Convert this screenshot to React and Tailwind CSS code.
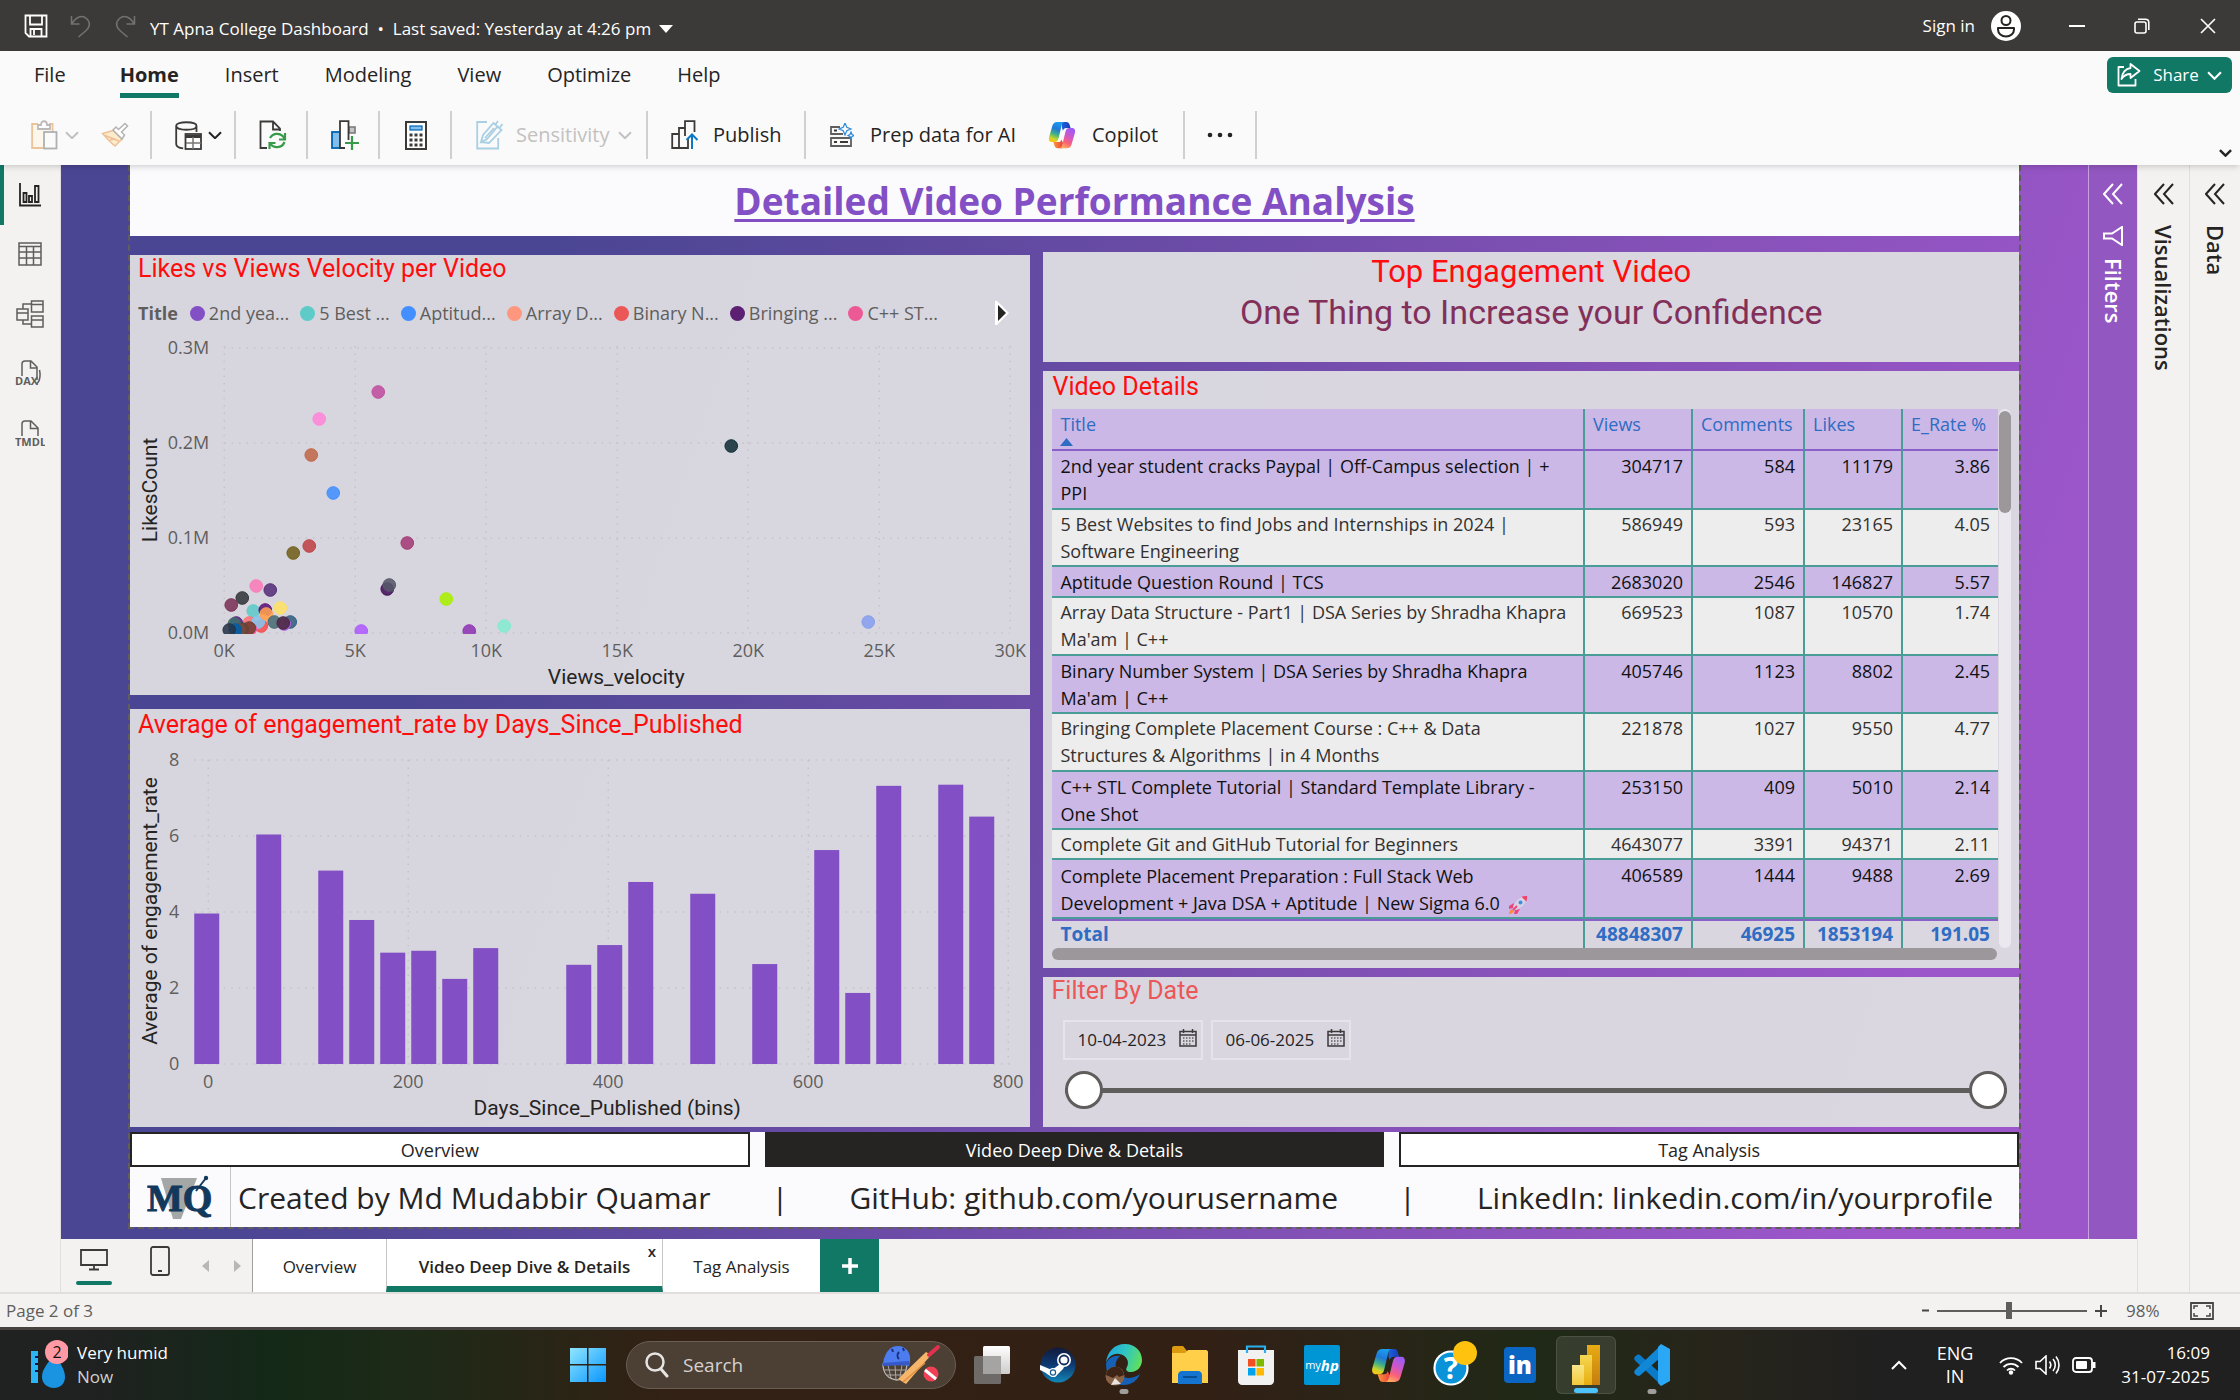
import React from "react";

const legend = [
  ["2nd yea...", "#8250c4"],
  ["5 Best ...", "#5ecbc8"],
  ["Aptitud...", "#438fff"],
  ["Array D...", "#ff977e"],
  ["Binary N...", "#eb5757"],
  ["Bringing ...", "#5b2071"],
  ["C++ ST...", "#ec5a96"],
];

const dots = [
  [248, 65, "#c04f9e"], [189, 92, "#ff86d9"], [181, 128, "#c1694a"], [203, 166, "#438fff"],
  [179, 219, "#bf4347"], [163, 226, "#73601c"], [277, 216, "#a43b76"], [257, 262, "#45135b"],
  [259, 258, "#56586a"], [316, 272, "#a8f000"], [374, 299, "#85ebd0"], [339, 304, "#9036b4"],
  [231, 304, "#af5bff"], [601, 119, "#13303a"], [738, 295, "#869fee"], [126, 259, "#fb7cb8"],
  [140, 263, "#57307a"], [112, 271, "#33373a"], [101, 278, "#7c3257"], [123, 284, "#5ecbc8"],
  [135, 283, "#5b1378"], [133, 294, "#ffb89b"], [131, 299, "#f64f51"], [119, 296, "#fb7474"],
  [128, 295, "#86c4ee"], [136, 287, "#ffa04f"], [150, 281, "#ffe066"], [160, 295, "#346080"],
  [144, 295, "#4a6c74"], [154, 297, "#ac5be0"], [153, 296, "#49293f"], [120, 302, "#f0509a"],
  [106, 296, "#5a2080"], [104, 297, "#3f706c"], [112, 302, "#4a4f4b"], [119, 301, "#6f4030"],
  [109, 303, "#704d40"], [105, 303, "#005fab"], [99, 303, "#283548"],
];

const bars = [
  [0, 3.96], [2, 6.04], [4, 5.09], [5, 3.79], [6, 2.93], [7, 2.98], [8, 2.24], [9, 3.05],
  [12, 2.61], [13, 3.13], [14, 4.79], [16, 4.48], [18, 2.63], [20, 5.63], [21, 1.87],
  [22, 7.32], [24, 7.35], [25, 6.51],
];

const rows = [
  [["2nd year student cracks Paypal | Off-Campus selection | +", "PPI"], "304717", "584", "11179", "3.86"],
  [["5 Best Websites to find Jobs and Internships in 2024 |", "Software Engineering"], "586949", "593", "23165", "4.05"],
  [["Aptitude Question Round | TCS"], "2683020", "2546", "146827", "5.57"],
  [["Array Data Structure - Part1 | DSA Series by Shradha Khapra", "Ma'am | C++"], "669523", "1087", "10570", "1.74"],
  [["Binary Number System | DSA Series by Shradha Khapra", "Ma'am | C++"], "405746", "1123", "8802", "2.45"],
  [["Bringing Complete Placement Course : C++ & Data", "Structures & Algorithms | in 4 Months"], "221878", "1027", "9550", "4.77"],
  [["C++ STL Complete Tutorial | Standard Template Library -", "One Shot"], "253150", "409", "5010", "2.14"],
  [["Complete Git and GitHub Tutorial for Beginners"], "4643077", "3391", "94371", "2.11"],
  [["Complete Placement Preparation : Full Stack Web", "Development + Java DSA + Aptitude | New Sigma 6.0"], "406589", "1444", "9488", "2.69"],
];

function Svg({ w, h, children, className = "", ...p }) {
  return (
    <svg width={w} height={h} viewBox={`0 0 ${w} ${h}`} fill="none" className={`shrink-0 ${className}`} aria-hidden="true" {...p}>
      {children}
    </svg>
  );
}

function Chevron({ className = "", w = 14, sw = 2 }) {
  return (
    <svg width={w} height={w * 0.6} viewBox="0 0 14 8.4" fill="none" className={`shrink-0 ${className}`} aria-hidden="true">
      <path d="M1 1.2l6 6 6-6" stroke="currentColor" strokeWidth={sw} />
    </svg>
  );
}

function CopilotIcon({ size, id }) {
  return (
    <svg width={size} height={size} viewBox="0 0 32 32" aria-hidden="true" className="shrink-0">
      <defs>
        <linearGradient id={id + "a"} x1="0.6" y1="0" x2="0.3" y2="1">
          <stop offset="0" stopColor="#1a9ef0" /><stop offset="0.35" stopColor="#2178d8" />
          <stop offset="0.6" stopColor="#3cae8c" /><stop offset="0.85" stopColor="#c8d62a" /><stop offset="1" stopColor="#ffc21a" />
        </linearGradient>
        <linearGradient id={id + "b"} x1="0.7" y1="0" x2="0.3" y2="1">
          <stop offset="0" stopColor="#9a5cf5" /><stop offset="0.4" stopColor="#cf57c8" />
          <stop offset="0.7" stopColor="#f8607a" /><stop offset="1" stopColor="#ffab5e" />
        </linearGradient>
        <linearGradient id={id + "c"}><stop offset="0" stopColor="#1b62d8" /><stop offset="1" stopColor="#1a3ab8" /></linearGradient>
        <linearGradient id={id + "d"}><stop offset="0" stopColor="#ff9a3c" /><stop offset="1" stopColor="#e8403c" /></linearGradient>
      </defs>
      <path d="M16 1h5c2 0 3 1 3.600 3l1.200 4h-5c-2 0-3 1-3.700 3L16 8z" fill={`url(#${id}c)`} />
      <path d="M16 31h-5c-2 0-3-1-3.600-3L6 24h6c2 0 2.600-1 3.200-3l2 4z" fill={`url(#${id}d)`} />
      <path d="M10.500 1H19c-2 0-2.700 1.500-3.300 3.500L12 20c-.7 2.800-2 4-4.500 4H4.500C1.500 24 .5 21.500 1.200 18.500L5 5.500C5.800 2.500 7.500 1 10.500 1z" fill={`url(#${id}a)`} />
      <path d="M21.500 31H13c2 0 2.700-1.500 3.300-3.500L20 12c.7-2.800 2-4 4.500-4h3c3 0 4 2.500 3.300 5.500L27 26.500c-.8 3-2.500 4.500-5.500 4.500z" fill={`url(#${id}b)`} />
    </svg>
  );
}

function TitleBar() {
  return (
    <header className="flex h-[51px] items-center bg-[#3b3a38] text-[17px] text-white">
      <button aria-label="Save" className="ml-6">
        <Svg w={24} h={24}>
          <path d="M1.500 1.500h21v21H5l-3.500-3.500zM6 1.500v9h12v-9M6.500 22v-7h11v7M10 15v6" stroke="#fff" strokeWidth="1.800" />
        </Svg>
      </button>
      <button aria-label="Undo" className="ml-[22px]">
        <Svg w={22} h={24}><path d="M1.500 2v8h8M2 9.500C6 3 12 0.500 16.500 4.500s3.500 9-1.500 13l-6.500 5.500" stroke="#73716f" strokeWidth="1.600" /></Svg>
      </button>
      <button aria-label="Redo" className="ml-[22px]">
        <Svg w={22} h={24}><path d="M20.500 2v8h-8M20 9.500C16 3 10 0.500 5.500 4.500s-3.500 9 1.500 13l6.500 5.500" stroke="#73716f" strokeWidth="1.600" /></Svg>
      </button>
      <button className="ml-[14px] flex items-center pt-1.5">
        YT Apna College Dashboard&nbsp;&nbsp;•&nbsp;&nbsp;Last saved: Yesterday at 4:26 pm
        <Svg w={14} h={8} className="ml-2"><path d="M0 0h14L7 8z" fill="#fff" /></Svg>
      </button>
      <div className="ml-auto flex items-center">
        <button className="flex items-center gap-4">
          Sign in
          <Svg w={30} h={30}>
            <circle cx="15" cy="15" r="15" fill="#fff" />
            <circle cx="15" cy="9.500" r="4.500" stroke="#252423" strokeWidth="2" />
            <path d="M7 17h16v1.500c0 4-3.500 7-8 7s-8-3-8-7z" stroke="#252423" strokeWidth="2" strokeLinejoin="round" />
          </Svg>
        </button>
        <button aria-label="Minimize" className="ml-12"><Svg w={16} h={16}><path d="M0 8h16" stroke="#fff" strokeWidth="2" /></Svg></button>
        <button aria-label="Restore" className="ml-[49px]">
          <Svg w={16} h={16}><rect x="1" y="4" width="11" height="11" rx="2" stroke="#fff" strokeWidth="1.600" /><path d="M4 1.200h7.500a3.300 3.300 0 013.300 3.300V12" stroke="#fff" strokeWidth="1.600" /></Svg>
        </button>
        <button aria-label="Close" className="mr-6 ml-[50px]"><Svg w={16} h={16}><path d="M1 1l14 14M15 1L1 15" stroke="#fff" strokeWidth="1.600" /></Svg></button>
      </div>
    </header>
  );
}

const menu = ["Insert", "Modeling", "View", "Optimize", "Help"];

function Ribbon() {
  const group = "flex h-12 items-center border-r-2 border-[#d2d0ce]";
  return (
    <div className="relative z-10 h-[114px] bg-[#fafafa] text-[20px] text-[#252423] shadow-md">
      <div className="flex h-[60px] items-start">
        <nav className="flex gap-[46px] pt-2.5 pl-[34px]">
          <button className="mr-2 pb-[9px] leading-7">File</button>
          <button className="border-b-[5px] border-[#117865] pb-1 leading-7 font-bold">Home</button>
          {menu.map((m) => <button key={m} className="pb-[9px] leading-7">{m}</button>)}
        </nav>
        <button className="mt-1.5 mr-2 ml-auto flex h-9 w-[125px] items-center justify-center rounded-md bg-[#117865] text-[17px] text-white">
          <Svg w={24} h={24} className="mr-3"><path d="M7 4H1.500v18.500h17V16M13.500 1l9 7-9 7v-4c-4 0-7 2-9 5 .5-6 4-10.500 9-11z" stroke="#fff" strokeWidth="1.800" strokeLinejoin="round" /></Svg>
          Share
          <Chevron className="ml-2" w={15} />
        </button>
      </div>
      <div className="flex items-center">
        <div className={`${group} w-[152px] pl-[31px]`}>
          <button aria-label="Paste" className="flex items-center gap-1.5 text-[#c3c1bf]">
            <Svg w={28} h={30}>
              <path d="M7 4H1.200v24H12M18 4h3.500v8" stroke="#ebc49c" strokeWidth="2" />
              <path d="M2.500 5.500h18V11H12v16H2.500z" fill="#fdf6ea" />
              <path d="M7 9V5h3c0-5 6-5 6 0h3v4z" fill="#fff" stroke="#bcbab8" strokeWidth="1.800" />
              <rect x="13" y="12" width="12.500" height="16.500" fill="#fafafa" stroke="#aeb0b2" strokeWidth="1.800" />
            </Svg>
            <Chevron />
          </button>
          <button aria-label="Format painter" className="ml-[22px]">
            <Svg w={28} h={26}>
              <path d="M12 8.500L1.500 11.500C5 15 9 20 14 24l7-7z" fill="#fdeccb" stroke="#efbf96" strokeWidth="1.500" />
              <path d="M4 13.500l14 5.500M9 18l5-1" stroke="#efbf96" strokeWidth="1.500" />
              <path d="M12 8l9 9 2.500-4-3-3L26.500 4 24 1.500 17.500 7.500l-2.500-2.500z" fill="#fff" stroke="#b5b3b1" strokeWidth="1.500" />
            </Svg>
          </button>
        </div>
        <div className={`${group} w-[84px] pl-[23px]`}>
          <button aria-label="Get data" className="flex items-center gap-1.5">
            <Svg w={27} h={29}>
              <path d="M1.200 5v18c0 3 3 4 7 4.300M21.500 5v6M1.200 5c0-5 20.300-5 20.300 0s-20.300 5-20.300 0z" stroke="#3b3a39" strokeWidth="1.800" />
              <rect x="10.500" y="13" width="15.500" height="15" fill="#fff" stroke="#3b3a39" strokeWidth="1.800" />
              <path d="M10.500 15.500h15.500" stroke="#3b3a39" strokeWidth="3" /><path d="M11 22h15M18 16v12" stroke="#797775" strokeWidth="1.500" />
            </Svg>
            <Chevron />
          </button>
        </div>
        <div className={`${group} w-[72px] justify-center pl-1`}>
          <button aria-label="Refresh">
            <Svg w={28} h={30}>
              <path d="M8 28H1.500V1.500H14l7 7V11M14 1.500v8h7" stroke="#3b3a39" strokeWidth="1.800" />
              <path d="M25.500 19A8 8 0 0011 18M11 23a8 8 0 0014.500-1M26 13v6.500h-6M10.500 29v-6h6" stroke="#379b4a" strokeWidth="2.200" />
            </Svg>
          </button>
        </div>
        <div className={`${group} w-[72px] justify-center pl-1`}>
          <button aria-label="New visual">
            <Svg w={28} h={30}>
              <rect x="1" y="12" width="8" height="16" fill="#83bdec" stroke="#0063b1" strokeWidth="1.800" />
              <path d="M18 7h6v6h-6z" fill="#c8c6c4" stroke="#797775" strokeWidth="1.600" />
              <path d="M14 28H9V1.200h8.500V20" fill="#fff" stroke="#3b3a39" strokeWidth="1.800" />
              <path d="M21 16v14M14 23h14" stroke="#379b4a" strokeWidth="2.200" />
            </Svg>
          </button>
        </div>
        <div className={`${group} w-[72px] justify-center pl-0.5`}>
          <button aria-label="Calculation">
            <Svg w={22} h={29}>
              <rect x="1" y="1" width="20" height="27" fill="#fff" stroke="#3b3a39" strokeWidth="2" />
              <rect x="5" y="5" width="12" height="4" fill="#83bdec" stroke="#0063b1" strokeWidth="1.200" />
              <path d="M4.500 14h13M4.500 19h13M4.500 24h13" stroke="#3b3a39" strokeWidth="3" strokeDasharray="3 2" />
            </Svg>
          </button>
        </div>
        <div className={`${group} w-[196px] pl-6`}>
          <button className="flex items-center text-[#c3c1bf]">
            <Svg w={28} h={30}>
              <path d="M11 2H1.200v26.500h21V18" stroke="#a9cfe3" strokeWidth="1.800" />
              <path d="M5 22l2-7L17.500 3l4 3.500L11 19z" stroke="#a9cfe3" strokeWidth="1.800" />
              <path d="M5 22l8 1L25.500 10l-4-3.500M18 8l-9 10M22 1l-3 4M26.500 4l-3 4" stroke="#a9cfe3" strokeWidth="1.800" />
            </Svg>
            <span className="mr-[9px] ml-3">Sensitivity</span>
            <Chevron />
          </button>
        </div>
        <div className={`${group} w-[158px] pl-[23px]`}>
          <button className="flex items-center gap-3.5">
            <Svg w={28} h={30}>
              <path d="M8 28H1.200V14H8M8 28V8h6M14 16V1.200h9.500V12M8 28h9V18" stroke="#3b3a39" strokeWidth="1.800" />
              <path d="M21 29V15M15.500 20l5.500-5.500 5.500 5.500" stroke="#0a78c2" strokeWidth="2" />
            </Svg>
            Publish
          </button>
        </div>
        <div className={`${group} w-[379px] pl-6`}>
          <button className="flex items-center gap-4">
            <Svg w={24} h={24}>
              <path d="M10 4H1v7h12M1 15h20v8H1z" stroke="#605e5c" strokeWidth="1.800" />
              <path d="M4 7.500h3M4 19h3M10 19h8" stroke="#3b3a39" strokeWidth="2" />
              <path d="M15 0l1.800 4.200L21 6l-4.200 1.800L15 12l-1.800-4.200L9 6l4.200-1.800zM21 9l1 2.500 2 1-2 1-1 2.500-1-2.500-2-1 2-1z" fill="#fafafa" stroke="#2b88d8" strokeWidth="1.200" />
            </Svg>
            Prep data for AI
          </button>
          <button className="ml-8 flex items-center gap-4">
            <CopilotIcon size={28} id="r" />
            Copilot
          </button>
        </div>
        <div className={`${group} w-[72px] justify-center`}>
          <button aria-label="More"><Svg w={26} h={6}><circle cx="3" cy="3" r="2.300" fill="#252423" /><circle cx="13" cy="3" r="2.300" fill="#252423" /><circle cx="23" cy="3" r="2.300" fill="#252423" /></Svg></button>
        </div>
        <button aria-label="Collapse ribbon" className="mt-9 mr-2 ml-auto"><Chevron w={13} sw={2.6} /></button>
      </div>
    </div>
  );
}

function SideRail() {
  const s = { stroke: "#605e5c", strokeWidth: 1.5 };
  return (
    <nav className="flex w-[61px] shrink-0 flex-col border-r border-[#e1dfdd] bg-[#f3f2f1]">
      <button aria-label="Report view" className="flex h-[60px] items-center justify-center border-l-4 border-[#117865] pr-1">
        <Svg w={22} h={24}><path d="M1 0v22.500h21M4.500 19v-9h3v9zM10 19v-6h3v6zM16 19V3h3.500v16z" stroke="#252423" strokeWidth="1.800" /></Svg>
      </button>
      <button aria-label="Table view" className="flex h-[58px] items-center justify-center">
        <Svg w={24} h={24}><path d="M1 1h22v22H1zM1 4.500h22M1 10h22M1 16h22M8.500 4.500V23M15.500 4.500V23" {...s} /></Svg>
      </button>
      <button aria-label="Model view" className="flex h-[61px] items-center justify-center">
        <Svg w={28} h={28}><path d="M1 9h11v11H1zM1 13h11M15.500 1H27v11H15.500zM15.500 4.500H27M15.500 16H27v11H15.500zM15.500 20H27M7 9V4h8.500M7 20v4h8.500" {...s} /></Svg>
      </button>
      <button aria-label="DAX query view" className="flex h-[60px] items-center justify-center">
        <Svg w={30} h={28}>
          <path d="M7 16V4c0-2 1-3 3-3h6l6 6v13M15.500 1v7h6.500M24.500 10c1 4 1 11-3 14" {...s} />
          <text x="0" y="25" fill="#605e5c" fontWeight="700" className="font-['Open_Sans',sans-serif] text-[11px]">DAX</text>
        </Svg>
      </button>
      <button aria-label="TMDL view" className="flex h-[60px] items-center justify-center">
        <Svg w={30} h={28}>
          <path d="M7 16V4c0-2 1-3 3-3h6l7 7v8M15.500 1v7.500H23" {...s} />
          <text x="0" y="26" fill="#605e5c" fontWeight="700" className="font-['Open_Sans',sans-serif] text-[11px]">TMDL</text>
        </Svg>
      </button>
    </nav>
  );
}

const axis = "fill-[#605e5c] text-[18px] font-['Open_Sans',sans-serif]";
const axisTitle = "fill-[#252423] text-[21px] font-['Roboto',sans-serif]";
const panel = "bg-[#dcdbe1]/97";
const heading = "font-['Roboto',sans-serif] text-[25px] leading-7";

function ScatterChart() {
  return (
    <section className={`flex min-h-0 flex-[440] flex-col ${panel}`}>
      <h2 className={`${heading} pl-2 text-[#ff0d0d]`}>Likes vs Views Velocity per Video</h2>
      <div className="mt-4 flex h-7 items-center pr-5 pl-2 text-[18px] text-[#605e5c]">
        <b className="mr-3">Title</b>
        <ul className="flex gap-[11px]">
          {legend.map(([t, c]) => (
            <li key={t} className="flex items-center gap-1"><i className="size-[15px] rounded-full" style={{ background: c }} />{t}</li>
          ))}
        </ul>
        <button aria-label="Next legend page" className="ml-auto"><Svg w={16} h={24}><path d="M1 0h2l12 12L3 24H1z" fill="#fff" /><path d="M4 4l8 8-8 8z" fill="#252423" /></Svg></button>
      </div>
      <svg viewBox="0 0 900 368" className="min-h-0 w-full flex-1">
        <g stroke="#c6c3c6" strokeWidth="1.500" strokeDasharray="1.500 5.900">
          {[0, 1, 2, 3].map((i) => <path key={i} d={`M94 ${21 + i * 95}H879`} />)}
          {[0, 1, 2, 3, 4, 5, 6].map((i) => <path key={"v" + i} d={`M${94 + i * 131} 19V306`} />)}
        </g>
        {["0.3M", "0.2M", "0.1M", "0.0M"].map((t, i) => <text key={t} x="79" y={27 + i * 95} textAnchor="end" className={axis}>{t}</text>)}
        {["0K", "5K", "10K", "15K", "20K", "25K", "30K"].map((t, i) => <text key={t} x={94 + i * 131} y="330" textAnchor="middle" className={axis}>{t}</text>)}
        <clipPath id="plot"><rect x="90" y="0" width="800" height="307" /></clipPath>
        <g clipPath="url(#plot)">
          {dots.map(([x, y, c], i) => <circle key={i} cx={x} cy={y} r="6.300" fill={c} fillOpacity="0.880" stroke={c} />)}
        </g>
        <text x="486" y="357" textAnchor="middle" className={axisTitle}>Views_velocity</text>
        <text transform="translate(27 163) rotate(-90)" textAnchor="middle" className={axisTitle}>LikesCount</text>
      </svg>
    </section>
  );
}

function BarChart() {
  return (
    <section className={`flex min-h-0 flex-[418] flex-col ${panel}`}>
      <h2 className={`${heading} pt-0.5 pl-2 text-[#ff0d0d]`}>Average of engagement_rate by Days_Since_Published</h2>
      <svg viewBox="0 0 900 388" className="min-h-0 w-full flex-1">
        <g stroke="#c6c3c6" strokeWidth="1.500" strokeDasharray="1.500 5.900">
          {[0, 1, 2, 3, 4].map((i) => <path key={i} d={`M64 ${21 + i * 76}H882`} />)}
          {[0, 1, 2, 3, 4].map((i) => <path key={"v" + i} d={`M${78 + i * 200} 21V325`} />)}
        </g>
        {["8", "6", "4", "2", "0"].map((t, i) => <text key={t} x="49" y={27 + i * 76} textAnchor="end" className={axis}>{t}</text>)}
        {["0", "200", "400", "600", "800"].map((t, i) => <text key={t} x={78 + i * 200} y="349" textAnchor="middle" className={axis}>{t}</text>)}
        {bars.map(([i, v]) => <rect key={i} x={64 + i * 31} y={325 - v * 38} width="25" height={v * 38} fill="#8250c4" />)}
        <text x="477" y="376" textAnchor="middle" className={axisTitle}>Days_Since_Published (bins)</text>
        <text transform="translate(27 172) rotate(-90)" textAnchor="middle" className={axisTitle}>Average of engagement_rate</text>
      </svg>
    </section>
  );
}

function Rocket() {
  return (
    <Svg w={20} h={20} className="ml-2 inline-block">
      <path d="M6 8L1 11v3l4-1zM12 14l-3 5H6l1-4z" fill="#e8467c" />
      <path d="M4 14c-2 1-3 3-3 5 2 0 4-1 5-3z" fill="#ff8a3d" />
      <path d="M18.500 1.500C13 1 8 5 5 12l3 3c7-3 11-8 10.500-13.500z" fill="#d9d2e4" />
      <path d="M19 1c-2-.2-4 0-5.500.8l4.700 4.700C19 5 19.200 3 19 1z" fill="#f0426b" />
      <circle cx="12.500" cy="7.500" r="2" fill="#3d8fe0" />
      <path d="M5 15l4-4" stroke="#e8467c" strokeWidth="2" />
    </Svg>
  );
}

function DetailsTable() {
  return (
    <section className={`flex min-h-0 flex-1 flex-col ${panel} pr-2 pb-2 pl-[9px]`}>
      <h2 className={`${heading} pt-0.5 pb-2 text-[#ff0d0d]`}>Video Details</h2>
      <div className="flex min-h-0 flex-1 gap-px overflow-hidden">
        <table className="w-full flex-1 table-fixed border-separate border-spacing-0 text-[18px] leading-[27px] text-[#111]">
          <colgroup><col /><col className="w-[108px]" /><col className="w-[112px]" /><col className="w-[98px]" /><col className="w-[95px]" /></colgroup>
          <thead>
            <tr className="bg-[#cbb8e7] text-left text-[#2f6cc3]">
              {["Title", "Views", "Comments", "Likes", "E_Rate %"].map((h, i) => (
                <th key={h} className={`h-[42px] border-b-2 border-b-[#8a5fca] px-2 pt-0.5 align-top font-normal whitespace-nowrap ${i < 4 ? "border-r-2 border-r-[#4a9d97]" : ""}`}>
                  {h}
                  {i === 0 && <Svg w={13} h={8} className="block"><path d="M0 8h13L6.500 0z" fill="#2f6cc3" /></Svg>}
                </th>
              ))}
            </tr>
          </thead>
          <tbody>
            {rows.map(([title, ...n], r) => {
              const pt = r % 2 ? "pt-px" : "pt-0.5";
              return (
                <tr key={r} className={r % 2 ? "bg-[#ededed] text-[#33312f]" : "bg-[#cbb8e7]"}>
                  <td className={`border-r-2 border-b-2 border-[#4a9d97] px-2 whitespace-nowrap ${pt}`}>
                    {title.map((t, i) => (
                      <span key={t} className="block">{t}{r === 8 && i === 1 && <Rocket />}</span>
                    ))}
                  </td>
                  {n.map((v, i) => <td key={i} className={`border-b-2 border-[#4a9d97] px-2 text-right align-top ${pt} ${i < 3 ? "border-r-2" : ""}`}>{v}</td>)}
                </tr>
              );
            })}
          </tbody>
          <tfoot>
            <tr className="text-[19px] font-bold text-[#2f6cc3]">
              <td className="border-t-2 border-r-2 border-t-[#8a5fca] border-r-[#4a9d97] px-2">Total</td>
              {["48848307", "46925", "1853194", "191.05"].map((v, i) => (
                <td key={v} className={`border-t-2 border-t-[#8a5fca] px-2 text-right ${i < 3 ? "border-r-2 border-r-[#4a9d97]" : ""}`}>{v}</td>
              ))}
            </tr>
          </tfoot>
        </table>
        <div className="w-3 rounded-full bg-[#ebe8f0]"><div className="mt-0.5 h-[102px] rounded-full bg-[#9b979b]" /></div>
      </div>
      <div className="mr-3.5 h-3 rounded-full bg-[#9b979b]" />
    </section>
  );
}

function DateBox({ value, label }) {
  return (
    <div className="flex h-10 w-[140px] items-center justify-between border-2 border-[#e6e4ea] pr-1 pl-3">
      <input aria-label={label} defaultValue={value} className="w-24 bg-transparent text-[17px] text-[#252423] outline-none" />
      <button aria-label={`Pick ${label.toLowerCase()}`} className="mb-1">
        <Svg w={18} h={18}>
          <path d="M1 2.500h16v14.500H1zM1 6h16M4.500 0v4M13.500 0v4" stroke="#3b3a39" strokeWidth="1.500" />
          <path d="M4 9h11M4 12h11M4 15h8" stroke="#605e5c" strokeWidth="1.500" strokeDasharray="1.500 1.500" />
        </Svg>
      </button>
    </div>
  );
}

function DateSlicer() {
  const range = "pointer-events-none absolute inset-0 h-[38px] w-full appearance-none bg-transparent [&::-webkit-slider-thumb]:size-[38px] [&::-webkit-slider-thumb]:appearance-none [&::-webkit-slider-thumb]:rounded-full [&::-webkit-slider-thumb]:border-[3px] [&::-webkit-slider-thumb]:border-[#605e5c] [&::-webkit-slider-thumb]:bg-white";
  return (
    <section className={`h-[150px] ${panel} px-2`}>
      <h2 className={`${heading} text-[#eb5757]`}>Filter By Date</h2>
      <div className="mt-[15px] flex gap-2 pl-3">
        <DateBox value="10-04-2023" label="Start date" />
        <DateBox value="06-06-2025" label="End date" />
      </div>
      <div className="relative mt-[11px] mr-1 ml-3.5 flex h-[38px] items-center">
        <div className="h-[5px] w-full bg-[#605e5c]" />
        <input type="range" aria-label="Range start" min="0" max="100" defaultValue="0" className={range} />
        <input type="range" aria-label="Range end" min="0" max="100" defaultValue="100" className={range} />
      </div>
    </section>
  );
}

function Canvas() {
  return (
    <main className="min-w-0 flex-1 bg-[linear-gradient(108deg,#4b4693_0%,#4b4693_22%,#6a4ba6_48%,#8451b7_68%,#9c56ca_90%,#9c56ca_100%)] pr-[67px] pb-[10px] pl-[67px]">
      <div className="flex h-full flex-col border-x-2 border-b-2 border-dashed border-[#605e5c]">
        <h1 className="h-[71px] shrink-0 bg-[#fbfafd] text-center text-[37px] leading-[71px] font-bold text-[#8250c4] underline decoration-[3px] underline-offset-4">Detailed Video Performance Analysis</h1>
        <div className="flex min-h-0 flex-1 gap-[13px] pb-[5px]">
          <div className="flex min-w-0 flex-[900] flex-col gap-3.5 pt-[19px]">
            <ScatterChart />
            <BarChart />
          </div>
          <div className="flex min-w-0 flex-[975] flex-col gap-[9px] pt-4">
            <section className={`h-[110px] text-center font-['Roboto',sans-serif] ${panel}`}>
              <h2 className="text-[31px] leading-10 text-[#ff0d0d]">Top Engagement Video</h2>
              <p className="text-[34px] leading-10 text-[#82305a]">One Thing to Increase your Confidence</p>
            </section>
            <DetailsTable />
            <DateSlicer />
          </div>
        </div>
        <nav className="grid shrink-0 grid-cols-3 gap-[15px] bg-[#fbfafd] text-[18px] text-[#252423]">
          <button className="h-[35px] border-2 border-[#252423] bg-white pt-0.5">Overview</button>
          <button className="h-[35px] bg-[#252423] pt-0.5 font-medium text-white">Video Deep Dive &amp; Details</button>
          <button className="h-[35px] border-2 border-[#252423] bg-white pt-0.5">Tag Analysis</button>
        </nav>
        <footer className="flex h-[60px] shrink-0 items-center bg-[#fbfafd] text-[30px] text-[#252423]">
          <div className="flex h-full w-[101px] items-center justify-center border-r border-[#c8c6c4]">
            <Svg w={66} h={48} className="font-['Liberation_Serif',serif]">
              <path d="M14 5h36L34 46h-8z" fill="#a3a8a6" />
              <path d="M49 18L59 5" stroke="#12395c" strokeWidth="2" /><circle cx="59" cy="5" r="2.200" fill="#12395c" />
              <text x="0" y="38" fontSize="38" fontWeight="700" fill="#12395c" stroke="#12395c">MQ</text>
            </Svg>
          </div>
          <div className="flex flex-1 justify-between pr-[26px] pl-[7px]">
            <span>Created by Md Mudabbir Quamar</span><span>|</span>
            <span>GitHub: github.com/yourusername</span><span>|</span>
            <span>LinkedIn: linkedin.com/in/yourprofile</span>
          </div>
        </footer>
      </div>
    </main>
  );
}

function SidePane({ title, filters, last }) {
  return (
    <aside className={`flex shrink-0 flex-col items-center pt-[18px] text-[22px] font-semibold ${filters ? "w-[49px] border-l border-[#c9a3e4] bg-[#9357c1] text-white" : `${last ? "w-[51px]" : "w-[52px]"} border-l border-[#e1dfdd] bg-[#f3f2f1] text-[#252423]`}`}>
      <button aria-label={`Expand ${title}`}><Svg w={20} h={22}><path d="M10 1L1 11l9 10M19 1l-9 10 9 10" stroke="currentColor" strokeWidth="2" /></Svg></button>
      {filters && <Svg w={22} h={20} className="mt-[21px]"><path d="M20 1v18L10 12.500H2v-5h8z" stroke="#fff" strokeWidth="2" /></Svg>}
      <h2 className={`[writing-mode:vertical-rl] ${filters ? "mt-3" : "mt-5"}`}>{title}</h2>
    </aside>
  );
}

function PageTabs() {
  return (
    <nav className="flex h-[53px] shrink-0 bg-[#f3f2f1] text-[17px] text-[#252423]">
      <button aria-label="Desktop layout" className="ml-[15px] flex w-9 flex-col items-center pt-2.5">
        <Svg w={28} h={22}><path d="M1 1h26v15H1zM14 16v4M9 20.500h10" stroke="#3b3a39" strokeWidth="1.800" /></Svg>
        <span className="mt-2.5 h-1 w-full rounded-full bg-[#117865]" />
      </button>
      <button aria-label="Mobile layout" className="ml-[38px] self-start pt-[7px]"><Svg w={20} h={30}><rect x="1" y="1" width="18" height="28" rx="2" stroke="#3b3a39" strokeWidth="1.800" /><path d="M8 25h4" stroke="#3b3a39" strokeWidth="2" /></Svg></button>
      <button aria-label="Previous page" className="ml-[31px]"><Svg w={8} h={12}><path d="M8 0v12L1 6z" fill="#b9b7b5" /></Svg></button>
      <button aria-label="Next page" className="mr-2.5 ml-[25px]"><Svg w={8} h={12}><path d="M0 0v12l7-6z" fill="#b9b7b5" /></Svg></button>
      <button className="w-[134px] border-l border-[#a19f9d] bg-white pt-0.5">Overview</button>
      <div className="relative flex w-[277px] border-x border-b-[6px] border-[#c8c6c4] border-b-[#117865] bg-white">
        <button className="flex-1 pt-2 font-semibold">Video Deep Dive &amp; Details</button>
        <button aria-label="Delete page" className="absolute top-0.5 right-1.5 text-[15px] leading-5 font-semibold">x</button>
      </div>
      <button className="w-[157px] bg-white pt-0.5">Tag Analysis</button>
      <button aria-label="New page" className="flex w-[59px] items-center justify-center bg-[#117865]"><Svg w={16} h={16}><path d="M8 0v16M0 8h16" stroke="#fff" strokeWidth="3.500" /></Svg></button>
    </nav>
  );
}

function StatusBar() {
  return (
    <div className="flex h-[35px] shrink-0 items-center border-t-2 border-[#e1dfdd] bg-[#f3f2f1] pl-1.5 text-[17px] text-[#605e5c]">
      Page 2 of 3
      <button aria-label="Zoom out" className="ml-auto"><Svg w={7} h={3}><path d="M0 1.500h7" stroke="#484644" strokeWidth="2" /></Svg></button>
      <input type="range" aria-label="Zoom" min="0" max="100" defaultValue="48" className="mx-2 h-[17px] w-[150px] appearance-none bg-[linear-gradient(#605e5c,#605e5c)] bg-[length:100%_2px] bg-center bg-no-repeat [&::-webkit-slider-thumb]:h-[17px] [&::-webkit-slider-thumb]:w-1.5 [&::-webkit-slider-thumb]:appearance-none [&::-webkit-slider-thumb]:bg-[#605e5c]" />
      <button aria-label="Zoom in"><Svg w={12} h={12}><path d="M6 0v12M0 6h12" stroke="#484644" strokeWidth="2" /></Svg></button>
      <span className="mr-[27px] ml-[19px] w-[37px]">98%</span>
      <button aria-label="Fit to page" className="mr-[26px]"><Svg w={24} h={18}><path d="M1 1h22v16H1z" stroke="#484644" strokeWidth="1.800" /><path d="M4 7V4h4M16 4h4v3M20 11v3h-4M8 14H4v-3" stroke="#484644" strokeWidth="1.500" /></Svg></button>
    </div>
  );
}

function TaskApp({ label, children, mark, active }) {
  return (
    <button aria-label={label} className={`relative flex h-[58px] w-[60px] items-center justify-center rounded-md ${active ? "border border-white/10 bg-white/10" : ""}`}>
      {children}
      {mark && <span className="absolute bottom-0 left-1/2 h-[5px] w-[9px] -translate-x-1/2 rounded-full bg-[#a09e9b]" />}
      {active && <span className="absolute bottom-0 left-1/2 h-[5px] w-6 -translate-x-1/2 rounded-full bg-[#4cc2ff]" />}
    </button>
  );
}

function Taskbar() {
  return (
    <footer className="relative flex h-[73px] shrink-0 items-center border-t-[3px] border-[#45423f] bg-[linear-gradient(90deg,#202121_0%,#202121_4%,#142918_12%,#1d2a17_18%,#332115_30%,#322015_54%,#2a2417_61%,#1f2916_69%,#27251a_76%,#202020_84%,#202020_100%)] text-[17px] text-white">
      <button className="ml-7 flex items-center text-left leading-6">
        <Svg w={40} h={52}>
          <path d="M3 12h7v32H3z" fill="#2cb4f5" /><path d="M7 18h3M7 25h3M7 32h3" stroke="#114" strokeWidth="2" />
          <path d="M26 16c6 8 11 14 11 22 0 7-5 11-11 11s-12-4-12-11c0-8 6-14 12-22z" fill="#1a93e0" />
          <circle cx="29" cy="13" r="12" fill="#ff99a4" />
          <text x="29" y="19" textAnchor="middle" fill="#111" fontSize="16" className="font-['Open_Sans',sans-serif]">2</text>
        </Svg>
        <span className="ml-[9px]">Very humid<span className="block text-[#cfcfcf]">Now</span></span>
      </button>
      <div className="absolute inset-y-0 left-[558px] flex items-center gap-1.5">
        <TaskApp label="Start">
          <Svg w={36} h={36}>
            <defs><linearGradient id="win" x1="0" y1="0" x2="1" y2="1"><stop stopColor="#8fe6ff" /><stop offset="1" stopColor="#0a96ff" /></linearGradient></defs>
            <path d="M0 1h17v16H0zM18.500 1H36v16H18.500zM0 18.500h17V35H0zM18.500 18.500H36V35H18.500z" fill="url(#win)" />
          </Svg>
        </TaskApp>
        <label className="ml-0.5 flex h-12 w-[330px] items-center rounded-full border border-[#6a5d54] bg-[#4c4035] pr-3.5 pl-[18px]">
          <Svg w={24} h={26}><circle cx="10" cy="10" r="8.500" stroke="#e6e4e3" strokeWidth="2.500" /><path d="M16 17l6 7" stroke="#e6e4e3" strokeWidth="3" strokeLinecap="round" /></Svg>
          <input placeholder="Search" aria-label="Search" className="ml-3.5 w-32 flex-1 bg-transparent text-[19px] outline-none placeholder:text-[#d6d2cf]" />
          <Svg w={60} h={42}>
            <path d="M2 20c0 9 5 15 14 16 6 0 9-7 10-16z" fill="#4c4035" stroke="#bdb9b6" strokeWidth="1.300" />
            <path d="M7 21l3 13M14 21l1 15M21 21l-2 12M3 26h22M6 31h18" stroke="#aaa6a3" />
            <path d="M2 19C4 8 9 2 17 2c8 0 13 7 12 15l-1 5z" fill="#4d7cf0" /><path d="M1 19l27-2v4L2 22z" fill="#3759c8" /><path d="M18 8c-2 2-2 5 0 7M11 5l1 3M22 4l1 3" stroke="#1b2f80" strokeWidth="2" />
            <path d="M50 11L25 40l-8-5 28-27z" fill="#f5b56b" /><path d="M44 19L22 38" stroke="#e08f3f" strokeWidth="1.500" /><path d="M48 11l9-8" stroke="#e0324f" strokeWidth="4" strokeLinecap="round" />
            <circle cx="50" cy="30" r="7.500" fill="#ef4056" /><path d="M44 26l11 9" stroke="#fff" strokeWidth="3" />
          </Svg>
        </label>
        <TaskApp label="Task view">
          <Svg w={36} h={38}>
            <defs><linearGradient id="tv" x1="0" y1="0" x2="0" y2="1"><stop stopColor="#fff" /><stop offset="1" stopColor="#ccc" /></linearGradient></defs>
            <rect y="10" width="27" height="28" rx="1.500" fill="#6d6a68" /><rect x="9" width="27" height="28" rx="1.500" fill="url(#tv)" /><path d="M9 10h18v18H9z" fill="#a6a4a2" />
          </Svg>
        </TaskApp>
        <TaskApp label="Steam">
          <Svg w={36} h={36}>
            <defs><linearGradient id="st" x1="0" y1="0" x2="0" y2="1"><stop stopColor="#111a3a" /><stop offset="0.5" stopColor="#0e3a73" /><stop offset="1" stopColor="#1387b8" /></linearGradient></defs>
            <circle cx="18" cy="18" r="17.500" fill="url(#st)" />
            <path d="M0 18l12 5 8-6 5 1-2 4-8 8c-6 0-9-5-15-7z" fill="#fff" /><circle cx="13" cy="25.500" r="4.500" fill="#fff" /><circle cx="13" cy="25.500" r="2.600" stroke="#1b5d92" strokeWidth="1.200" />
            <circle cx="24" cy="13" r="7" fill="#fff" /><circle cx="24" cy="13" r="4.500" stroke="#12305f" strokeWidth="1.800" />
          </Svg>
        </TaskApp>
        <TaskApp label="Edge" mark>
          <Svg w={38} h={42}>
            <defs><linearGradient id="e1" x1="0" y1="0.300" x2="1" y2="0.600"><stop stopColor="#1fa8e0" /><stop offset="0.500" stopColor="#30c6c0" /><stop offset="1" stopColor="#62e05a" /></linearGradient></defs>
            <path d="M1 20c2-6 8-9 14-8-6 5-6 14 0 19 5 4 13 4 20-1-3 7-9 11-16 11C9 41 1 33 1 20z" fill="#1561b8" />
            <path d="M1 19C2 8 9 0 20 0c10 0 17 7 17 16 0 7-5 12-11 12-4 0-6-2-4-5 3-6-1-12-8-13C8 9 3 13 1 19z" fill="url(#e1)" />
            <circle cx="10" cy="32" r="9.500" fill="#8a6347" /><path d="M1 31c1-10 16-12 18 0l-5 2-2-2-4 3z" fill="#3d2417" /><path d="M6 41l4-7 6 6z" fill="#e9e4df" />
          </Svg>
        </TaskApp>
        <TaskApp label="File Explorer">
          <Svg w={36} h={38}>
            <path d="M0 2c0-1 1-2 2-2h9l4 5v6H0z" fill="#dc9a10" /><path d="M0 7h13l3-3h18c1 0 2 1 2 2v31H0z" fill="#ffcf4a" />
            <path d="M6 38V29c0-2 1.500-4 4-4h16c2.500 0 4 2 4 4v9z" fill="#1474cf" /><path d="M11 31h14" stroke="#0b4f93" strokeWidth="2" />
          </Svg>
        </TaskApp>
        <TaskApp label="Microsoft Store">
          <Svg w={36} h={40}>
            <path d="M0 5h36v31c0 2-2 4-4 4H4c-2 0-4-2-4-4z" fill="#f1f1f1" />
            <path d="M9 8V1.500h18V8" stroke="#29b0ee" strokeWidth="2.200" />
            <path d="M10 14h7.500v7.500H10z" fill="#f25022" /><path d="M18.500 14H26v7.500h-7.500z" fill="#7fba00" /><path d="M10 23h7.500v7.500H10z" fill="#00a4ef" /><path d="M18.500 23H26v7.500h-7.500z" fill="#ffb900" />
          </Svg>
        </TaskApp>
        <TaskApp label="myHP">
          <span className="flex h-10 w-9 items-center justify-center rounded-xs bg-[#0096d6] text-[11px]">my<b className="text-[15px] italic">hp</b></span>
        </TaskApp>
        <TaskApp label="Copilot"><CopilotIcon size={35} id="t" /></TaskApp>
        <TaskApp label="Get help">
          <Svg w={46} h={56}>
            <circle cx="20" cy="31" r="16.500" fill="#0a93d8" stroke="#fff" strokeWidth="2.200" />
            <text x="20" y="42" textAnchor="middle" fontSize="30" fontWeight="700" fill="#fff" className="font-['Open_Sans',sans-serif]">?</text>
            <circle cx="34" cy="16" r="12" fill="#ffc20e" />
          </Svg>
        </TaskApp>
        <TaskApp label="LinkedIn">
          <span className="flex h-9 w-8 items-center justify-center rounded-sm bg-[#0a66c2] text-[24px] font-extrabold">in</span>
        </TaskApp>
        <TaskApp label="Power BI" active>
          <Svg w={28} h={40}>
            <defs>
              <linearGradient id="p1" x1="0" y1="0" x2="0" y2="1"><stop stopColor="#e8ac14" /><stop offset="1" stopColor="#c47c0e" /></linearGradient>
              <linearGradient id="p2" x1="0" y1="0" x2="0" y2="1"><stop stopColor="#f6d751" /><stop offset="1" stopColor="#e6ad10" /></linearGradient>
              <linearGradient id="p3" x1="0" y1="0" x2="0" y2="1"><stop stopColor="#f9e589" /><stop offset="1" stopColor="#f3cb3b" /></linearGradient>
            </defs>
            <path d="M15 0h13v40H15z" fill="url(#p1)" /><path d="M8 10h12v30H8z" fill="url(#p2)" /><path d="M0 20h12v20H0z" fill="url(#p3)" />
          </Svg>
        </TaskApp>
        <TaskApp label="VS Code" mark>
          <Svg w={36} h={42}>
            <path d="M27 1v40L1 16.500c-1-1-1-3 0-4l2-1.500c1-.7 2-.6 3 0L27 30z" fill="#0a7bc9" /><path d="M27 1L1 26c-1 1-1 3 0 4l2 1.500c1 .7 2 .6 3 0L27 13z" fill="#1287d6" />
            <path d="M27 0l9 5v32l-9 5-3-3V3z" fill="#2aa7f5" />
          </Svg>
        </TaskApp>
      </div>
      <div className="ml-auto flex items-center pr-[30px]">
        <button aria-label="Show hidden icons"><Svg w={16} h={10}><path d="M1 9l7-7 7 7" stroke="#fff" strokeWidth="2" /></Svg></button>
        <button className="ml-[30px] text-center text-[18px] leading-[23px]">ENG<br />IN</button>
        <button aria-label="Network, volume and battery" className="ml-[26px] flex items-center gap-3">
          <Svg w={24} h={20}><path d="M1 8a15 15 0 0122 0M4.500 12a10.500 10.500 0 0115 0M8 15.500a5.500 5.500 0 018 0" stroke="#fff" strokeWidth="1.800" /><circle cx="12" cy="17.500" r="2.200" fill="#fff" /></Svg>
          <Svg w={25} h={20}><path d="M1 6.500h4L11 1v18l-6-5.500H1zM14.500 6.500c1.500 2 1.500 5 0 7M18 4c3 3.500 3 8.500 0 12M21 1.500c4 5 4 12 0 17" stroke="#fff" strokeWidth="1.600" /></Svg>
          <Svg w={25} h={16}><rect x="1" y="1" width="19" height="14" rx="3" stroke="#fff" strokeWidth="1.800" /><rect x="4" y="4" width="11" height="8" rx="1" fill="#fff" /><path d="M22 5v6" stroke="#fff" strokeWidth="3" /></Svg>
        </button>
        <button className="ml-6 text-right leading-6">16:09<br />31-07-2025</button>
      </div>
    </footer>
  );
}

export default function App() {
  return (
    <div className="flex h-screen flex-col overflow-hidden bg-[#f3f2f1] font-['Open_Sans',sans-serif]">
      <TitleBar />
      <Ribbon />
      <div className="flex min-h-0 flex-1">
        <SideRail />
        <div className="flex min-w-0 flex-1 flex-col">
          <div className="flex min-h-0 flex-1">
            <Canvas />
            <SidePane title="Filters" filters />
          </div>
          <PageTabs />
        </div>
        <SidePane title="Visualizations" />
        <SidePane title="Data" last />
      </div>
      <StatusBar />
      <Taskbar />
    </div>
  );
}
